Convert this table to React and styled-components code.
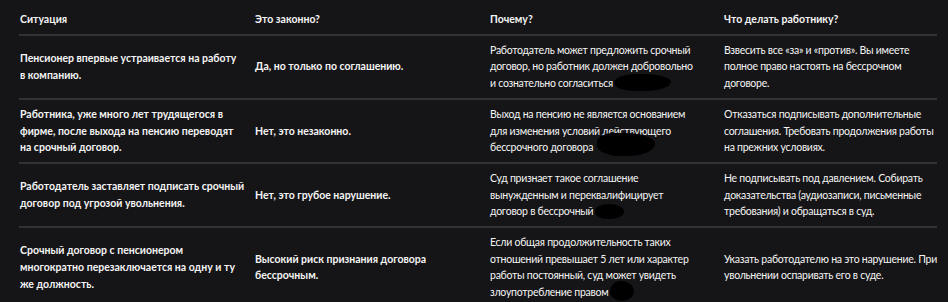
import React from 'react'
import styled, { createGlobalStyle } from 'styled-components'

const GlobalStyle = createGlobalStyle`
  html, body {
    margin: 0;
    padding: 0;
    background-color: #151517;
  }
  body {
    font-family: Lato, 'Liberation Sans', sans-serif;
    color: #f4f4f4;
  }
`

const Page = styled.div`
  padding: 5px 0 0 19px;
  width: 918px;
`

const Table = styled.div`
  display: grid;
  grid-template-columns: 235px 235px 234px 214px;
`

const Row = styled.div`
  display: contents;
`

// padding-right per column: situation, legal, why, todo
const gutters = [6, 20, 22, 0]

const Cell = styled.div`
  display: flex;
  align-items: center;
  padding: 6px ${(p) => gutters[p.$col]}px 6px 1px;
  border-bottom: 2px solid #333335;
  font-size: 10.5px;
  line-height: 16.7px;
  font-weight: ${(p) => (p.$strong ? 700 : 400)};
  letter-spacing: ${(p) => (p.$strong ? '0' : '-0.25px')};
`

const HeadCell = styled(Cell)`
  padding-top: 6px;
  padding-bottom: 6px;
`

const Text = styled.span`
  display: block;
`

// black marker scribble over the end of a line
const Redaction = styled.span`
  position: relative;
  display: inline-block;
  width: ${(p) => p.$w}px;
  height: 0;
  margin-left: ${(p) => p.$gap}px;

  &::after {
    content: '';
    position: absolute;
    left: 0;
    right: 0;
    top: -${(p) => p.$up}px;
    height: ${(p) => p.$h}px;
    background: #000;
    border-radius: ${(p) => p.$shape};
  }
`

const headers = ['Ситуация', 'Это законно?', 'Почему?', 'Что делать работнику?']

const rows = [
  {
    situation: 'Пенсионер впервые устраивается на работу в\u00a0компанию.',
    legal: 'Да, но только по соглашению.',
    why: 'Работодатель может предложить срочный договор, но работник должен добровольно и\u00a0сознательно согласиться',
    blot: { w: 57, h: 17, up: 13, gap: 1, shape: '40% 50% 45% 35% / 50% 45% 55% 50%' },
    todo: 'Взвесить все «за» и «против». Вы имеете полное право настоять на бессрочном договоре.',
  },
  {
    situation: 'Работника, уже много лет трудящегося в фирме, после выхода на пенсию переводят на\u00a0срочный договор.',
    legal: 'Нет, это незаконно.',
    why: 'Выход на пенсию не является основанием для изменения условий действующего бессрочного договора',
    blot: { w: 58, h: 23, up: 18, gap: 4, shape: '30% 60% 55% 45% / 45% 55% 60% 55%' },
    todo: 'Отказаться подписывать дополнительные соглашения. Требовать продолжения работы на прежних условиях.',
  },
  {
    situation: 'Работодатель заставляет подписать срочный договор под угрозой увольнения.',
    legal: 'Нет, это грубое нарушение.',
    why: 'Суд признает такое соглашение вынужденным и переквалифицирует договор в\u00a0бессрочный',
    blot: { w: 29, h: 15, up: 11, gap: 2, shape: '50% 55% 50% 45% / 50% 55% 50% 50%' },
    todo: 'Не подписывать под давлением. Собирать доказательства (аудиозаписи, письменные требования) и обращаться в суд.',
  },
  {
    situation: 'Срочный договор с пенсионером многократно перезаключается на одну и ту же\u00a0должность.',
    legal: 'Высокий риск признания договора бессрочным.',
    why: 'Если общая продолжительность таких отношений превышает 5 лет или характер работы постоянный, суд может увидеть злоупотребление правом',
    blot: { w: 24, h: 20, up: 15, gap: 2, shape: '45% 55% 50% 50% / 55% 50% 50% 45%' },
    todo: 'Указать работодателю на это нарушение. При увольнении оспаривать его в суде.',
  },
]

export default function App() {
  return (
    <>
      <GlobalStyle />
      <Page>
        <Table>
          <Row>
            {headers.map((h, i) => (
              <HeadCell key={h} $col={i} $strong>
                {h}
              </HeadCell>
            ))}
          </Row>
          {rows.map((r) => (
            <Row key={r.situation}>
              <Cell $col={0} $strong>
                <Text>{r.situation}</Text>
              </Cell>
              <Cell $col={1} $strong>
                <Text>{r.legal}</Text>
              </Cell>
              <Cell $col={2}>
                <Text>
                  {r.why}
                  <Redaction $w={r.blot.w} $h={r.blot.h} $up={r.blot.up} $gap={r.blot.gap} $shape={r.blot.shape} />
                </Text>
              </Cell>
              <Cell $col={3}>
                <Text>{r.todo}</Text>
              </Cell>
            </Row>
          ))}
        </Table>
      </Page>
    </>
  )
}
